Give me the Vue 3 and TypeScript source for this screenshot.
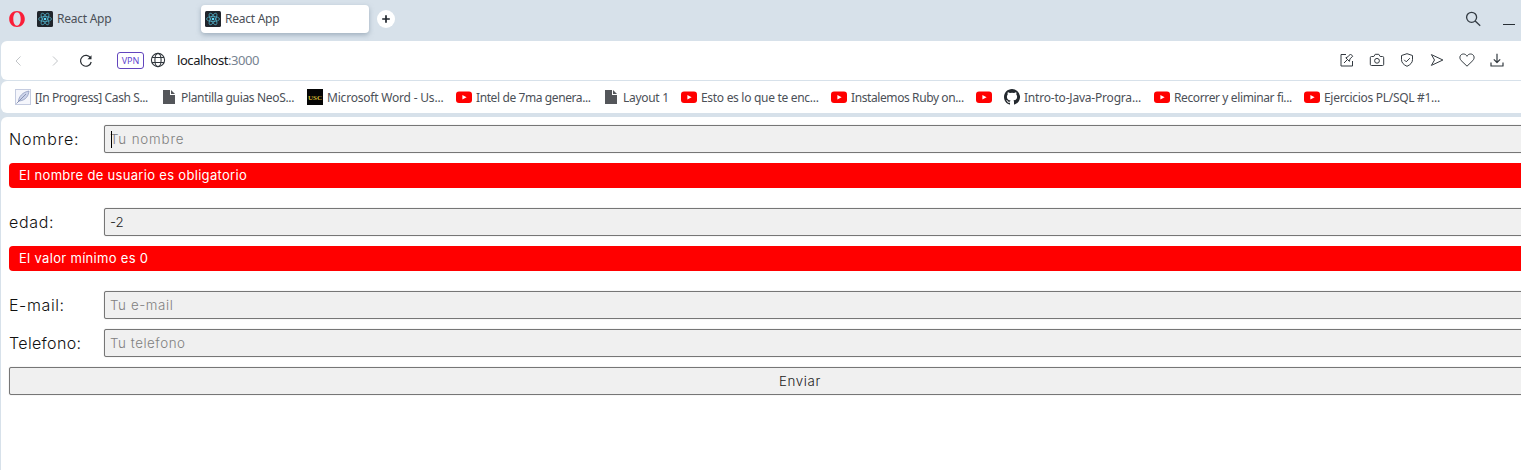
<script setup lang="ts">
type Icon = 'feather' | 'file' | 'usc' | 'youtube' | 'github'
interface Bookmark { icon: Icon; label: string; width: number; spacing: number }
interface Field { label: string; placeholder: string; value?: string; error?: string; focused?: boolean; labelSpacing: number; inputSpacing: number }

const bookmarks: Bookmark[] = [
  { icon: 'feather', label: '[In Progress] Cash S...', width: 146, spacing: -0.4 },
  { icon: 'file', label: 'Plantilla guias NeoS...', width: 146, spacing: -0.34 },
  { icon: 'usc', label: 'Microsoft Word - Us...', width: 149, spacing: -0.2 },
  { icon: 'youtube', label: 'Intel de 7ma genera...', width: 147, spacing: -0.4 },
  { icon: 'file', label: 'Layout 1', width: 78, spacing: -0.3 },
  { icon: 'youtube', label: 'Esto es lo que te enc...', width: 150, spacing: -0.3 },
  { icon: 'youtube', label: 'Instalemos Ruby on...', width: 145, spacing: -0.4 },
  { icon: 'youtube', label: '', width: 28, spacing: 0 },
  { icon: 'github', label: 'Intro-to-Java-Progra...', width: 150, spacing: -0.2 },
  { icon: 'youtube', label: 'Recorrer y eliminar fi...', width: 150, spacing: -0.38 },
  { icon: 'youtube', label: 'Ejercicios PL/SQL #1...', width: 150, spacing: -0.3 },
]

const fields: Field[] = [
  { label: 'Nombre:', placeholder: 'Tu nombre', error: 'El nombre de usuario es obligatorio', focused: true, labelSpacing: 0.85, inputSpacing: 0.85 },
  { label: 'edad:', placeholder: '', value: '-2', error: 'El valor mínimo es 0', labelSpacing: 0.65, inputSpacing: 0 },
  { label: 'E-mail:', placeholder: 'Tu e-mail', labelSpacing: 0.6, inputSpacing: 0.6 },
  { label: 'Telefono:', placeholder: 'Tu telefono', labelSpacing: 0.35, inputSpacing: 0.55 },
]
const tabs = [{ title: 'React App', active: false }, { title: 'React App', active: true }]
</script>

<template>
  <div class="browser">
    <header class="tabbar">
      <svg class="opera" width="16" height="16" viewBox="0 0 16 16"><path fill="#fa1e38" fill-rule="evenodd" d="M8 0C3.5 0 .2 3.4.2 8s3.3 8 7.8 8 7.8-3.4 7.8-8S12.500 0 8 0Zm0 1.300c2.300 0 3.700 2.900 3.700 6.700S10.300 14.700 8 14.700 4.300 11.800 4.300 8 5.700 1.300 8 1.300Z" /></svg>
      <div v-for="(tab, i) in tabs" :key="i" class="tab" :class="{ active: tab.active }">
        <svg width="16" height="16" viewBox="0 0 16 16">
          <rect width="16" height="16" rx="1.5" fill="#20252c" />
          <g fill="none" stroke="#53b7d0" stroke-width=".7">
            <ellipse cx="8" cy="8" rx="6.5" ry="2.5" />
            <ellipse cx="8" cy="8" rx="6.5" ry="2.5" transform="rotate(60 8 8)" />
            <ellipse cx="8" cy="8" rx="6.5" ry="2.5" transform="rotate(120 8 8)" />
          </g>
          <circle cx="8" cy="8" r="1.3" fill="#61dafb" />
        </svg>
        <span>{{ tab.title }}</span>
      </div>
      <div class="newtab"><svg width="18" height="18" viewBox="0 0 18 18"><path d="M9 5.2v7.6M5.2 9h7.6" stroke="#20262d" stroke-width="1.7" /></svg></div>
      <div class="window-tools">
        <svg width="16" height="16" viewBox="0 0 16 16" fill="none" stroke="#333b43" stroke-width="1.3"><circle cx="6.6" cy="6.3" r="5" /><path d="m10.2 10 5 4.8" /></svg>
        <svg class="minimize" width="12" height="2" viewBox="0 0 12 2"><path d="M0 .5h12" stroke="#272e35" /></svg>
      </div>
    </header>

    <nav class="addressbar">
      <svg class="back" width="16" height="16" viewBox="0 0 16 16"><path d="M10.500 3.500 6 8l4.500 4.500" /></svg>
      <svg class="forward" width="16" height="16" viewBox="0 0 16 16"><path d="M6 3.5 10.5 8 6 12.5" /></svg>
      <svg class="reload" width="16" height="16" viewBox="0 0 16 16"><path d="M12.6 5.1A5.400 5.400 0 1 0 13.2 9" fill="none" stroke="#282d32" stroke-width="1.2" /><path d="M13.500 2.300v4H9.500Z" fill="#282d32" /></svg>
      <span class="vpn">VPN</span>
      <svg class="globe" width="16" height="16" viewBox="0 0 16 16" fill="none" stroke="#30363c" stroke-width="1.1"><circle cx="8" cy="8" r="6.6" /><ellipse cx="8" cy="8" rx="3.1" ry="6.6" /><path d="M2 5.5h12M2 10.5h12" /></svg>
      <span class="url">localhost<span>:3000</span></span>
      <div class="page-tools">
        <svg viewBox="0 0 16 16"><path d="M7 2.500H2v11.500h11.500V9M5 11l3.300-3.300M6.800 5.800l3.600 3.600.600-2.500 2.700-2.700-2.200-2.200-2.600 2.800Z" /></svg>
        <svg viewBox="0 0 16 16"><path d="M2.500 4.500H4.800L6.200 2.300h3.600L11.200 4.500h2.300q1.200 0 1.200 1.200v6.600q0 1.200-1.200 1.200h-11q-1.200 0-1.200-1.200V5.700q0-1.200 1.200-1.200Z" /><circle cx="8" cy="8.800" r="2.400" /></svg>
        <svg viewBox="0 0 16 16"><path d="M8 1.7 13.5 3.5v4.2c0 3-2.1 5-5.5 6.600-3.400-1.600-5.500-3.600-5.500-6.600V3.500ZM5.200 7.800l2 2 3.700-3.600" /></svg>
        <svg viewBox="0 0 16 16"><path d="M2.400 2.600 13.900 8 2.400 13.400 5.500 8Z" /></svg>
        <svg viewBox="0 0 16 16"><path d="M8 14.200 2.100 8.500C-.4 5.500 1.300 2 4.400 2 6.300 2 7.400 3.100 8 4.300 8.600 3.100 9.700 2 11.600 2c3.100 0 4.800 3.500 2.300 6.500Z" /></svg>
        <svg viewBox="0 0 16 16"><path d="M8 1.800v8.700M4.800 7.300 8 10.500l3.200-3.200M2 10.500v3.500h12v-3.500" stroke-width="1.200" /></svg>
      </div>
    </nav>

    <nav class="bookmarks">
      <div v-for="(item, i) in bookmarks" :key="i" class="bookmark" :style="{ width: item.width + 'px' }">
        <svg width="16" height="16" viewBox="0 0 16 16">
          <g v-if="item.icon === 'feather'"><rect x=".5" y=".5" width="15" height="15" fill="#f5f6fc" stroke="#c5cce0" /><path d="M3.500 12.500C3.500 8 7.500 3 14 2c-.5 5-3 9-9.500 10Z" fill="#cbd2e9" stroke="#8794b9" stroke-width=".7" /><path d="M1.500 14.500 11 5" stroke="#7582a6" stroke-width=".8" /></g>
          <path v-else-if="item.icon === 'file'" d="M2 1h7v5h5v9H2ZM10 1l4 4h-4Z" fill="#54565a" />
          <g v-else-if="item.icon === 'usc'"><rect width="16" height="16" fill="#050505" /><text x="8" y="10.7" text-anchor="middle" textLength="14" lengthAdjust="spacingAndGlyphs" class="usc-mark">USC</text></g>
          <g v-else-if="item.icon === 'youtube'"><rect y="2.5" width="16" height="11.4" rx="3" fill="#f00" /><path d="m6.4 5.9 4.2 2.3-4.2 2.3Z" fill="#fff" /></g>
          <path v-else fill="#24292e" d="M8 0C3.58 0 0 3.58 0 8c0 3.54 2.29 6.53 5.47 7.59.4.07.55-.17.55-.38v-1.49c-2.23.48-2.7-.95-2.7-.95-.36-.92-.89-1.17-.89-1.17-.73-.5.05-.49.05-.49.81.06 1.23.83 1.23.83.72 1.23 1.88.87 2.34.67.07-.52.28-.88.51-1.08-1.78-.2-3.65-.89-3.65-3.96 0-.87.31-1.59.82-2.15-.08-.2-.36-1.02.08-2.12 0 0 .67-.21 2.2.82a7.6 7.6 0 0 1 4 0c1.53-1.04 2.2-.82 2.2-.82.44 1.1.16 1.92.08 2.12.51.56.82 1.28.82 2.15 0 3.08-1.87 3.76-3.65 3.96.29.25.54.73.54 1.48v2.2c0 .21.15.46.55.38A8 8 0 0 0 8 0Z" />
        </svg>
        <span v-if="item.label" :style="{ letterSpacing: item.spacing + 'px' }">{{ item.label }}</span>
      </div>
    </nav>

    <main class="page">
      <form @submit.prevent>
        <div v-for="field in fields" :key="field.label" class="field" :class="{ invalid: field.error }">
          <div class="control">
            <label :style="{ letterSpacing: field.labelSpacing + 'px' }">{{ field.label }}</label>
            <div class="input" :class="{ filled: field.value }" :style="{ letterSpacing: field.inputSpacing + 'px' }"><i v-if="field.focused" class="caret"></i>{{ field.value || field.placeholder }}</div>
          </div>
          <p v-if="field.error" class="error">{{ field.error }}</p>
        </div>
        <button type="submit">Enviar</button>
      </form>
    </main>
  </div>
</template>

<style>
body { margin: 0; overflow: hidden; }
</style>

<style scoped>
* { box-sizing: border-box; }
svg { display: block; flex: none; }
.browser { width: 1521px; height: 470px; overflow: hidden; background: #d7e1ea; font-family: "Noto Sans", sans-serif; font-size: 12px; color: #4b5057; }
.tabbar { height: 41px; padding: 5px 6px 8px 9px; display: flex; align-items: center; }
.opera { margin-right: 8px; }
.tab { width: 168px; height: 28px; border-radius: 4px; padding-left: 4px; display: flex; align-items: center; gap: 4px; letter-spacing: -.25px; }
.tab span { margin-top: -1px; }
.tab.active { background: #fff; box-shadow: 0 2px 5px #8496a6aa; }
.newtab { width: 18px; height: 18px; border-radius: 50%; background: #fff; margin-left: 8px; }
.window-tools { margin-left: auto; display: flex; gap: 22px; align-items: center; }
.minimize { margin-top: 12px; }
.addressbar { height: 39px; margin-left: 1px; padding-left: 9px; background: #fff; border-radius: 6px 0 0 6px; display: flex; align-items: center; }
.back, .forward { fill: none; stroke: #c2c5c8; stroke-width: 1; }
.forward { margin-left: 21px; }
.reload { margin-left: 15px; }
.vpn { width: 27px; height: 17px; margin: -1px 0 0 23px; border: 1px solid #6245bd; border-radius: 3px; color: #6245cf; font-size: 9px; line-height: 16px; text-align: center; letter-spacing: -.1px; }
.globe { margin: -1px 0 0 6px; }
.url { margin: -2px 0 0 11px; color: #17191c; font-size: 13px; letter-spacing: -.44px; }
.url span { color: #778391; }
.page-tools { margin: -1px 0 0 auto; padding-right: 16px; display: flex; gap: 14px; }
.page-tools svg { width: 16px; height: 16px; fill: none; stroke: #333a40; stroke-width: 1; stroke-linejoin: round; }
.bookmarks { height: 32px; margin: 1px 0 4px 1px; padding-left: 14px; background: #fff; border-radius: 6px 0 0 6px; display: flex; align-items: center; }
.bookmark { flex: none; display: flex; align-items: center; gap: 4px; white-space: nowrap; }
.usc-mark { fill: #d7bd35; font: bold 7px "Liberation Serif", serif; }
.page { height: 353px; margin-left: 1px; padding: 8px; background: #fff; border-radius: 6px 0 0; font-family: Inter, sans-serif; }
form { width: 1582px; }
.field { margin-bottom: 10px; }
.field.invalid { margin-bottom: 20px; }
.control { display: flex; }
label { flex: none; width: 95px; font-size: 16px; font-weight: 300; line-height: 28px; color: #111; }
.input { flex: 1; height: 28px; padding-left: 5px; border: 1px solid #767676; border-radius: 2px; box-shadow: 0 0 1px #aaa; background: #f0f0f0; color: #808080; font-size: 13.33px; font-weight: 300; line-height: 27px; }
.input.filled { color: #222; }
.caret { position: absolute; width: 1px; height: 17px; margin: 5px 0 0 1px; background: #000; }
.error { height: 25px; margin: 10px 0 0; padding-left: 10px; border-radius: 4px; background: #f00; color: #fff; font-size: 13px; letter-spacing: .31px; line-height: 25px; }
button { display: block; width: 100%; height: 28px; padding: 0; border: 1px solid #767676; border-radius: 2px; box-shadow: 0 0 1px #aaa; background: #f0f0f0; color: #222; font: 300 13.33px/26px Inter, sans-serif; letter-spacing: .65px; }
</style>
